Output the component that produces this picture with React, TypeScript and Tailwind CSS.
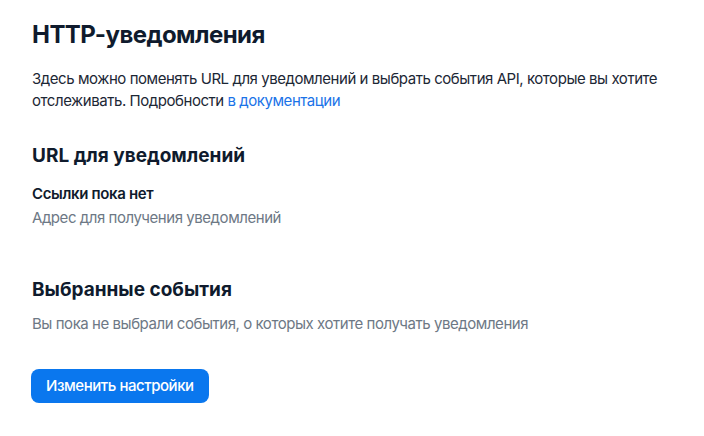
export default function App() {
  return (
    <div className="min-h-screen bg-white px-8 pt-[20px] text-[#0f1b2d]" style={{ fontFamily: "Inter, 'Noto Sans', sans-serif" }}>
      <h1 className="text-[24px] leading-[30px] font-bold tracking-[-0.55px]">HTTP-уведомления</h1>
      <p className="mt-[18px] text-[15px] leading-[22px] tracking-[-0.45px] text-[#1c2735]">
        Здесь можно поменять URL для уведомлений и выбрать события API, которые вы хотите отслеживать. Подробности{" "}
        <a href="#" className="text-[#1a73e8]">в документации</a>
      </p>

      <h2 className="mt-[31px] text-[19px] leading-[26px] font-bold">URL для уведомлений</h2>
      <div className="mt-[14px]">
        <div className="text-[15px] leading-[22px] font-semibold tracking-[-0.35px]">Ссылки пока нет</div>
        <div className="mt-[2px] text-[15px] leading-[22px] tracking-[-0.45px] text-[#6d7885]">Адрес для получения уведомлений</div>
      </div>

      <h2 className="mt-[48px] text-[19px] leading-[26px] font-bold">Выбранные события</h2>
      <p className="mt-[10px] text-[15px] leading-[22px] tracking-[-0.45px] text-[#6d7885]">
        Вы пока не выбрали события, о которых хотите получать уведомления
      </p>

      <button className="-ml-px mt-[34px] h-[34px] rounded-lg bg-[#0a77ee] px-[15px] text-[15px] font-medium tracking-[-0.45px] text-white">
        Изменить настройки
      </button>
    </div>
  );
}
